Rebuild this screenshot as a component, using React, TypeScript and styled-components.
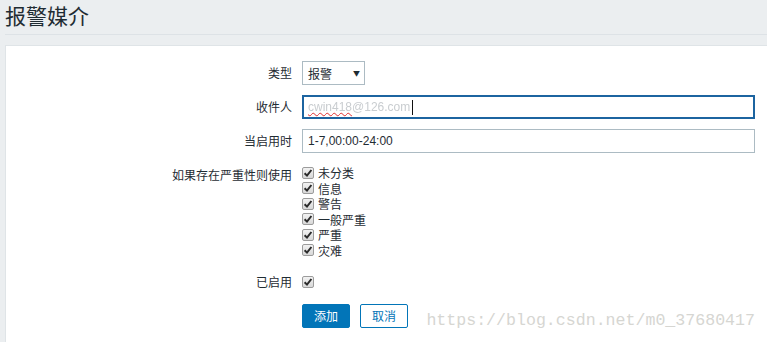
import React from "react";
import styled, { createGlobalStyle } from "styled-components";

const GlobalStyle = createGlobalStyle`
  html, body {
    margin: 0;
    padding: 0;
    background: #ebeef0;
  }
  body {
    font-family: "Liberation Sans", "Noto Sans CJK SC", sans-serif;
    font-size: 12px;
    color: #1f2c33;
  }
  * { box-sizing: border-box; }
`;

const Page = styled.div`
  position: relative;
  height: 342px;
  overflow: hidden;
  padding-left: 5px;
  display: flex;
  flex-direction: column;
`;

const Header = styled.header`
  height: 35px;
  border-bottom: 1px solid #dde2e6;
  flex: none;
`;

const Title = styled.h1`
  margin: 0;
  font-size: 21px;
  line-height: 30px;
  font-weight: normal;
  color: #1f2c33;
  font-family: "Noto Sans CJK SC", sans-serif;
`;

const Panel = styled.main`
  margin-top: 10px;
  flex: 1;
  background: #ffffff;
  border: 1px solid #dfe4e7;
  border-right: none;
  border-bottom: none;
  padding: 15px 12px 0 0;
`;

const Form = styled.div`
  display: flex;
  flex-direction: column;
  gap: 10px;
`;

const Row = styled.div<{ $offset?: number }>`
  display: grid;
  grid-template-columns: 286px 1fr;
  column-gap: 10px;
  padding-top: ${(p) => p.$offset ?? 0}px;
`;

const Label = styled.label`
  text-align: right;
  line-height: 24px;
  font-family: "Noto Sans CJK SC", sans-serif;
  white-space: nowrap;
`;

const Field = styled.div`
  display: flex;
  align-items: center;
  min-height: 24px;
`;

const Select = styled.div`
  width: 63px;
  height: 24px;
  border: 1px solid #acbbc3;
  background: #fff;
  display: flex;
  align-items: center;
  justify-content: space-between;
  padding: 0 4px 0 5px;
  font-family: "Noto Sans CJK SC", sans-serif;
`;

const Arrow = styled.span`
  font-size: 7px;
  color: #1f2c33;
`;

const TextBox = styled.div<{ $focused?: boolean }>`
  width: 100%;
  height: 24px;
  border: 1px solid ${(p) => (p.$focused ? "#1c64a0" : "#acbbc3")};
  box-shadow: ${(p) => (p.$focused ? "inset 0 0 0 1px #1c64a0" : "none")};
  background: #fff;
  display: flex;
  align-items: center;
  padding: 0 5px;
  font-family: "Liberation Sans", sans-serif;
  font-size: 12px;
`;

const Hidden = styled.span`
  color: #c9cdd0;
  filter: blur(0.7px);
`;

const Squiggle = styled.span`
  text-decoration: underline wavy #e03030;
  text-decoration-thickness: 1px;
`;

const Caret = styled.span`
  display: inline-block;
  width: 1px;
  height: 15px;
  background: #111;
  margin-left: 2px;
`;

const CheckList = styled.div`
  display: flex;
  flex-direction: column;
  padding-top: 2px;
`;

const CheckItem = styled.div`
  display: flex;
  align-items: center;
  height: 15.5px;
  gap: 4px;
  font-family: "Noto Sans CJK SC", sans-serif;
`;

const Box = styled.span`
  width: 12px;
  height: 12px;
  border: 1px solid #9c9c9c;
  border-radius: 2px;
  background: linear-gradient(#f2f2f2, #d8d8d8);
  display: inline-flex;
  align-items: center;
  justify-content: center;
  flex: none;
`;

const Buttons = styled.div`
  display: flex;
  gap: 10px;
`;

const Button = styled.button<{ $primary?: boolean }>`
  height: 24px;
  padding: 0 11px;
  border-radius: 2px;
  border: 1px solid #0275b8;
  background: ${(p) => (p.$primary ? "#0275b8" : "#ffffff")};
  color: ${(p) => (p.$primary ? "#ffffff" : "#0275b8")};
  font-family: "Noto Sans CJK SC", sans-serif;
  font-size: 12px;
  line-height: 22px;
  cursor: pointer;
`;

const Watermark = styled.div`
  position: absolute;
  right: 12px;
  top: 309px;
  font-family: "Liberation Mono", monospace;
  font-size: 16.6px;
  line-height: 24px;
  color: #d6d6d2;
  pointer-events: none;
`;

const Check = () => (
  <Box>
    <svg width="10" height="10" viewBox="0 0 10 10">
      <path d="M1.6 5.2 L4 7.6 L8.4 2" fill="none" stroke="#2b2b2b" strokeWidth="2" />
    </svg>
  </Box>
);

const severities = ["未分类", "信息", "警告", "一般严重", "严重", "灾难"];

export default function App() {
  return (
    <>
      <GlobalStyle />
      <Page>
        <Header>
          <Title>报警媒介</Title>
        </Header>
        <Panel>
          <Form>
            <Row>
              <Label>类型</Label>
              <Field>
                <Select>
                  <span>报警</span>
                  <Arrow>▼</Arrow>
                </Select>
              </Field>
            </Row>
            <Row>
              <Label>收件人</Label>
              <Field>
                <TextBox $focused>
                  <Hidden>
                    <Squiggle>cwin418</Squiggle>@126.com
                  </Hidden>
                  <Caret />
                </TextBox>
              </Field>
            </Row>
            <Row>
              <Label>当启用时</Label>
              <Field>
                <TextBox>1-7,00:00-24:00</TextBox>
              </Field>
            </Row>
            <Row>
              <Label>如果存在严重性则使用</Label>
              <CheckList>
                {severities.map((s) => (
                  <CheckItem key={s}>
                    <Check />
                    <span>{s}</span>
                  </CheckItem>
                ))}
              </CheckList>
            </Row>
            <Row $offset={2}>
              <Label>已启用</Label>
              <Field>
                <Check />
              </Field>
            </Row>
            <Row>
              <span />
              <Buttons>
                <Button $primary>添加</Button>
                <Button>取消</Button>
              </Buttons>
            </Row>
          </Form>
        </Panel>
        <Watermark>https://blog.csdn.net/m0_37680417</Watermark>
      </Page>
    </>
  );
}
